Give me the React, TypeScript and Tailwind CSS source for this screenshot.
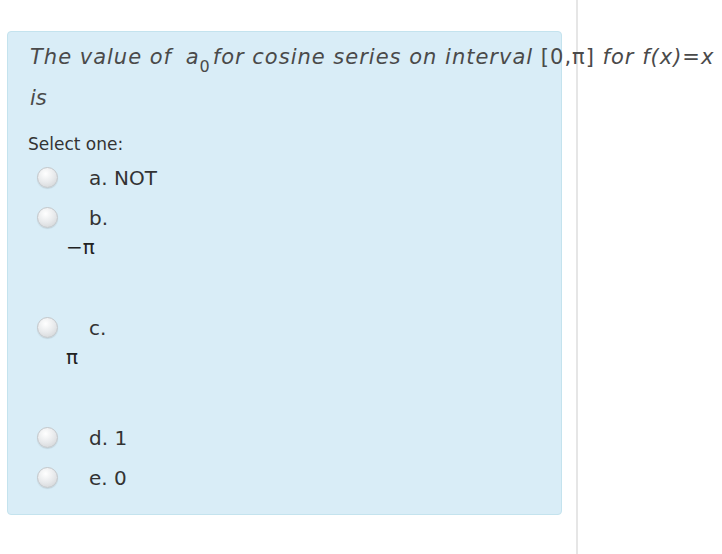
import React from "react";

const font = { fontFamily: '"DejaVu Sans", Verdana, sans-serif' };

function Radio() {
  return (
    <span className="inline-block w-[21px] h-[21px] rounded-full border border-[#c4c7ca] bg-[radial-gradient(circle_at_40%_30%,#ffffff_0%,#e8eaec_50%,#cdd0d3_100%)] shadow-[0_1px_1px_rgba(0,0,0,0.1)]" />
  );
}

function Option({ label, math }: { label: string; math?: string }) {
  return (
    <div className={math ? "h-[110px]" : "h-[40px]"}>
      <div className="h-[40px] flex items-center pl-[29px]">
        <Radio />
        <span className="ml-[31px] text-[20px] text-[#333]">{label}</span>
      </div>
      {math && (
        <div className="pl-[58px] -mt-[3px] text-[20px] leading-[24px] text-[#222]">
          {math}
        </div>
      )}
    </div>
  );
}

export default function App() {
  return (
    <div className="flex h-[554px] w-[722px] bg-white overflow-hidden" style={font}>
      <div className="w-[578px] shrink-0 border-r-2 border-[#e6e6e6] pt-[31px] pl-[7px]">
        <div className="w-[555px] h-[484px] bg-[#d9edf7] border border-[#c4e3ee] rounded-[4px] pt-[5px]">
          <div className="pl-[22px] text-[21px] leading-[41px] text-[#4a4a4a] italic whitespace-nowrap tracking-[1px]">
            The value of <span className="ml-[6px]">a<sub className="not-italic text-[16px] align-[-4px]">0</sub></span>
            <span className="ml-[2px]">for cosine series on interval</span>{" "}
            <span className="not-italic">[0,π]</span> for f(x)<span className="not-italic">=</span>x
          </div>
          <div className="pl-[22px] text-[21px] leading-[41px] text-[#4a4a4a] italic">is</div>
          <div className="pl-[20px] mt-[13px] text-[17px] text-[#333]">Select one:</div>
          <div>
            <Option label="a. NOT" />
            <Option label="b." math="−π" />
            <Option label="c." math="π" />
            <Option label="d. 1" />
            <Option label="e. 0" />
          </div>
        </div>
      </div>
    </div>
  );
}
